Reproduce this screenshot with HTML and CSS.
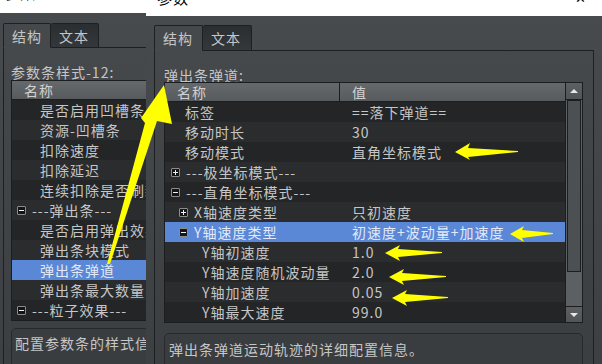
FILE: index.html
```html
<!DOCTYPE html>
<html lang="zh">
<head>
    <meta charset="UTF-8">
    <title>参数</title>
    <link rel="stylesheet" href="styles.css">
</head>
<body>
    <!-- back dialog -->
    <div class="window window-back">
        <div class="titlebar"><span class="title">参数</span></div>
        <div class="body">
            <div class="tabs">
                <div class="tab active">结构</div>
                <div class="tab">文本</div>
            </div>
            <div class="pane">
                <div class="pane-label">参数条样式-12:</div>
                <div class="tree">
                    <div class="tree-view">
                        <div class="tree-head"><div class="head-cell">名称</div><div class="head-cell">值</div></div>
                        <div class="tree-rows">
                            <div class="row"><div class="cell-name b-leaf">是否启用凹槽条</div><div class="cell-val"></div></div>
                            <div class="row"><div class="cell-name b-leaf">资源-凹槽条</div><div class="cell-val"></div></div>
                            <div class="row"><div class="cell-name b-leaf">扣除速度</div><div class="cell-val"></div></div>
                            <div class="row"><div class="cell-name b-leaf">扣除延迟</div><div class="cell-val"></div></div>
                            <div class="row"><div class="cell-name b-leaf">连续扣除是否刷新</div><div class="cell-val"></div></div>
                            <div class="row"><div class="cell-name b-grp"><span class="exp minus"></span>---弹出条---</div><div class="cell-val"></div></div>
                            <div class="row"><div class="cell-name b-leaf">是否启用弹出效果</div><div class="cell-val"></div></div>
                            <div class="row"><div class="cell-name b-leaf">弹出条块模式</div><div class="cell-val"></div></div>
                            <div class="row sel"><div class="cell-name b-leaf">弹出条弹道</div><div class="cell-val"></div></div>
                            <div class="row"><div class="cell-name b-leaf">弹出条最大数量</div><div class="cell-val"></div></div>
                            <div class="row"><div class="cell-name b-grp"><span class="exp minus"></span>---粒子效果---</div><div class="cell-val"></div></div>
                        </div>
                    </div>
                </div>
                <div class="desc">配置参数条的样式信息。</div>
            </div>
        </div>
    </div>

    <!-- front dialog -->
    <div class="window window-front">
        <div class="titlebar"><span class="title">参数</span><span class="close">✕</span></div>
        <div class="body">
            <div class="tabs">
                <div class="tab active">结构</div>
                <div class="tab">文本</div>
            </div>
            <div class="pane">
                <div class="pane-label">弹出条弹道:</div>
                <div class="tree">
                    <div class="tree-view">
                        <div class="tree-head"><div class="head-cell">名称</div><div class="head-cell">值</div></div>
                        <div class="tree-rows">
                            <div class="row"><div class="cell-name leaf0">标签</div><div class="cell-val">==落下弹道==</div></div>
                            <div class="row"><div class="cell-name leaf0">移动时长</div><div class="cell-val">30</div></div>
                            <div class="row"><div class="cell-name leaf0">移动模式</div><div class="cell-val">直角坐标模式</div></div>
                            <div class="row"><div class="cell-name grp0"><span class="exp plus"></span>---极坐标模式---</div><div class="cell-val"></div></div>
                            <div class="row"><div class="cell-name grp0"><span class="exp minus"></span>---直角坐标模式---</div><div class="cell-val"></div></div>
                            <div class="row"><div class="cell-name grp1"><span class="exp plus"></span>X轴速度类型</div><div class="cell-val">只初速度</div></div>
                            <div class="row sel"><div class="cell-name grp1"><span class="exp minus"></span>Y轴速度类型</div><div class="cell-val">初速度+波动量+加速度</div></div>
                            <div class="row"><div class="cell-name leaf2">Y轴初速度</div><div class="cell-val">1.0</div></div>
                            <div class="row"><div class="cell-name leaf2">Y轴速度随机波动量</div><div class="cell-val">2.0</div></div>
                            <div class="row"><div class="cell-name leaf2">Y轴加速度</div><div class="cell-val">0.05</div></div>
                            <div class="row"><div class="cell-name leaf2">Y轴最大速度</div><div class="cell-val">99.0</div></div>
                        </div>
                    </div>
                    <div class="vscroll">
                        <div class="sb-btn up"></div>
                        <div class="sb-thumb"></div>
                        <div class="sb-track"></div>
                        <div class="sb-btn down"></div>
                    </div>
                </div>
                <div class="desc">弹出条弹道运动轨迹的详细配置信息。</div>
            </div>
        </div>
    </div>

    <!-- yellow annotation arrows drawn over the screenshot -->
    <svg class="marks" width="602" height="364" viewBox="0 0 602 364">
        <polygon class="arrow" points="107,264 145,123 141,118 164,85 172,124 157,121 110,264"/>
        <polygon class="arrow" points="455,152 470,143 468,148 518,151 518,152 468,157 470,160"/>
        <polygon class="arrow" points="510,234 524,226 522,230 553,233 553,234 522,238 524,242"/>
        <polygon class="arrow" points="385,253 400,245 398,249 442,252 442,253 398,257 400,261"/>
        <polygon class="arrow" points="389,277 404,269 402,273 446,276 446,277 402,281 404,285"/>
        <polygon class="arrow" points="392,298 407,290 405,294 448,297 448,298 405,302 407,306"/>
    </svg>
</body>
</html>
```

FILE: styles.css
```css
* {
    box-sizing: border-box;
}
body {
    margin: 0;
    width: 602px;
    height: 364px;
    overflow: hidden;
    position: relative;
    background: #3d4043;
    font-family: "Noto Sans CJK SC", "Noto Sans", sans-serif;
    font-size: 14px;
    letter-spacing: 1px;
    color: #c6c6c6;
}

/* windows */
.window {
    position: absolute;
    top: 0;
    height: 364px;
    display: flex;
    flex-direction: column;
    background: linear-gradient(#484b4e, #3d4043);
    overflow: hidden;
}
.window-back {
    left: 0;
    width: 320px;
}
.window-front {
    left: 146px;
    width: 456px;
}
.titlebar {
    flex: none;
    display: flex;
    justify-content: space-between;
    background: #fff;
    color: #000;
    overflow: hidden;
}
.window-back .titlebar {
    height: 13px;
    padding-left: 4px;
}
.window-front .titlebar {
    height: 16px;
    padding: 0 15px 0 11px;
}
.title {
    font-size: 15px;
    line-height: 16px;
    margin-top: -10px;
}
.window-back .title {
    margin-top: -15px;
}
.close {
    font-size: 13px;
    line-height: 16px;
    margin-top: -10px;
}
.body {
    flex: 1;
    display: flex;
    flex-direction: column;
}
.window-back .body {
    padding: 10px 0 0 3px;
}
.window-front .body {
    padding: 9px 8px 0 8px;
}

/* tabs */
.tabs {
    flex: none;
    display: flex;
}
.tabs::after {
    content: "";
    flex: 1;
    border-bottom: 1px solid #1d1f21;
}
.tab {
    width: 49px;
    height: 26px;
    line-height: 24px;
    padding-left: 8px;
    border: 1px solid #1d1f21;
    border-radius: 2px 2px 0 0;
    background: linear-gradient(#2b2e30, #35383a);
}
.tab + .tab {
    border-left: none;
}
.tab.active {
    background: #46494c;
    border-bottom-color: #46494c;
}
.window-back .tab {
    width: 48px;
    height: 25px;
}

/* tab page */
.pane {
    flex: 1;
    display: flex;
    flex-direction: column;
    border: 1px solid #1d1f21;
    border-top: none;
    background: linear-gradient(#46494c, #3b3e41);
}
.window-front .pane {
    padding: 17px 10px 0 9px;
}
.window-back .pane {
    padding: 17px 0 0 7px;
}
.pane-label {
    line-height: 14px;
}
.window-back .pane-label {
    line-height: 15px;
}

/* tree */
.tree {
    flex: none;
    display: flex;
    border: 1px solid #1b1d1f;
    background: #232527;
}
.tree-view {
    flex: 1;
    overflow: hidden;
}
.tree-head {
    height: 19px;
    line-height: 18px;
    display: grid;
    grid-template-columns: 175px 1fr;
    border-bottom: 1px solid #1b1d1f;
    background: linear-gradient(#65696c, #575b5e);
    color: #d2d2d2;
}
.head-cell {
    padding-left: 12px;
}
.head-cell:first-child {
    border-right: 1px solid #1b1d1f;
}
.window-back .tree-head {
    grid-template-columns: 230px 1fr;
}
.row {
    height: 20px;
    line-height: 20px;
    display: grid;
    grid-template-columns: 175px 1fr;
    white-space: nowrap;
}
.window-back .row {
    grid-template-columns: 230px 1fr;
}
.row:nth-child(even) {
    background: #2a2c2e;
}
.row.sel {
    background: #5a87d6;
    color: #e2eaf8;
}
.cell-name {
    display: flex;
    align-items: center;
    overflow: hidden;
}
.cell-val {
    padding-left: 12px;
}
.leaf0 { padding-left: 20px; }
.grp0 { padding-left: 6px; }
.grp1 { padding-left: 14px; }
.leaf2 { padding-left: 37px; }
.b-grp { padding-left: 5px; }
.b-leaf { padding-left: 28px; }

.exp {
    flex: none;
    display: grid;
    place-items: center;
    width: 9px;
    height: 9px;
    margin-right: 6px;
    border: 1px solid #8c8c8c;
    border-radius: 1px;
    background: #141517;
}
.exp::before, .exp::after {
    content: "";
    grid-area: 1 / 1;
    width: 5px;
    height: 1px;
    background: #f0f0f0;
}
.exp.plus::after {
    width: 1px;
    height: 5px;
}
.exp.minus::after {
    display: none;
}

/* scrollbar */
.vscroll {
    width: 17px;
    display: flex;
    flex-direction: column;
    border-left: 1px solid #1b1d1f;
    background: #5d6063;
}
.sb-btn {
    height: 17px;
    display: grid;
    place-items: center;
    background: linear-gradient(#5c6063, #515558);
    border-bottom: 1px solid #1b1d1f;
}
.sb-btn.down {
    height: 16px;
    border-bottom: none;
    border-top: 1px solid #1b1d1f;
}
.sb-btn::before {
    content: "";
    border-left: 4px solid transparent;
    border-right: 4px solid transparent;
}
.sb-btn.up::before {
    border-bottom: 4px solid #e8e8e8;
}
.sb-btn.down::before {
    border-top: 4px solid #e8e8e8;
}
.sb-thumb {
    height: 172px;
    margin: 0 1px;
    border: 1px solid #1b1d1f;
    background: #4d5053;
}
.sb-track {
    flex: 1;
}

/* description box */
.desc {
    height: 60px;
    line-height: 16px;
    border: 1px solid #27292b;
    border-radius: 5px;
    background: #3a3d40;
    white-space: nowrap;
    overflow: hidden;
}
.window-front .desc {
    margin-top: 10px;
    padding: 7px 4px;
}
.window-back .desc {
    margin-top: 7px;
    padding: 6px 3px;
}

/* annotation overlay */
.marks {
    position: absolute;
    top: 0;
    left: 0;
    pointer-events: none;
}
.arrow {
    fill: #ffff00;
}
```
